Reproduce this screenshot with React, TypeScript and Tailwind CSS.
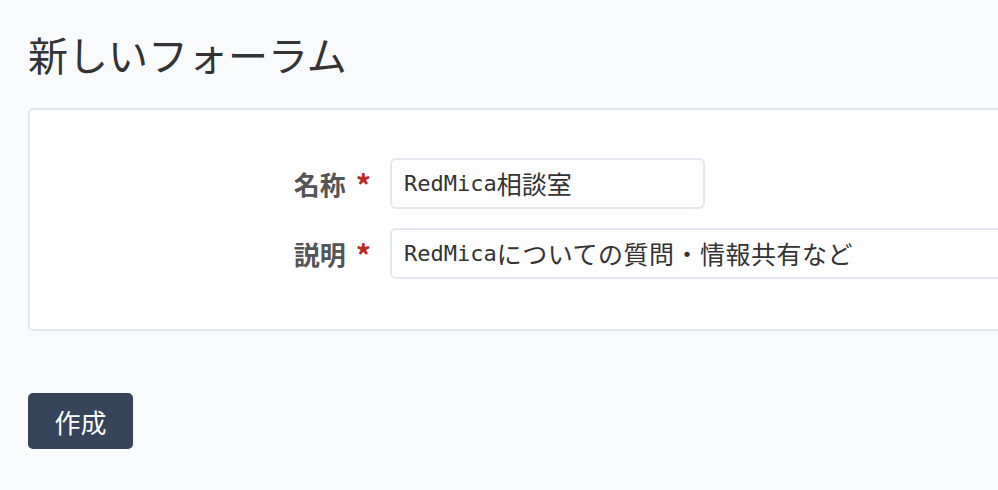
import React from "react";

const mono = '"DejaVu Sans Mono", "Liberation Mono", monospace';

export default function App() {
  return (
    <div
      className="w-[998px] h-[490px] overflow-hidden bg-[#f9fafc] text-[#333]"
      style={{ fontFamily: '"Noto Sans CJK JP", "Noto Sans", sans-serif' }}
    >
      <div className="pl-[28px] pt-[29px]">
        <h2 className="text-[40px] leading-[50px] font-normal text-[#333]">
          新しいフォーラム
        </h2>
        <div className="mt-[29px] w-[1100px] rounded-[5px] border-2 border-[#e3e8f0] bg-white pt-[48px] pb-[50px]">
          <div className="flex flex-col gap-[19px]">
            <div className="flex items-center">
              <label className="flex w-[341px] items-center justify-end gap-[10px] text-[26px] font-bold text-[#555]">
                <span>名称</span>
                <span className="text-[30px] leading-none text-[#bb2a1e]">*</span>
              </label>
              <div className="ml-[19px] flex h-[51px] w-[315px] items-center rounded-[6px] border-2 border-[#e3e8f0] bg-[#fdfdfe] px-[12px] text-[25px] text-[#333]">
                <span className="text-[22px]" style={{ fontFamily: mono }}>RedMica</span>
                <span>相談室</span>
              </div>
            </div>
            <div className="flex items-center">
              <label className="flex w-[341px] items-center justify-end gap-[10px] text-[26px] font-bold text-[#555]">
                <span>説明</span>
                <span className="text-[30px] leading-none text-[#bb2a1e]">*</span>
              </label>
              <div className="ml-[19px] flex h-[51px] w-[700px] items-center rounded-[6px] border-2 border-[#e3e8f0] bg-[#fdfdfe] px-[12px] text-[25px] text-[#333]">
                <span className="text-[22px]" style={{ fontFamily: mono }}>RedMica</span>
                <span className="tracking-[0.5px]">についての質問・情報共有など</span>
              </div>
            </div>
          </div>
        </div>
        <button className="mt-[62px] flex h-[56px] w-[105px] items-center justify-center rounded-[5px] bg-[#364559] text-[26px] text-white">
          作成
        </button>
      </div>
    </div>
  );
}
